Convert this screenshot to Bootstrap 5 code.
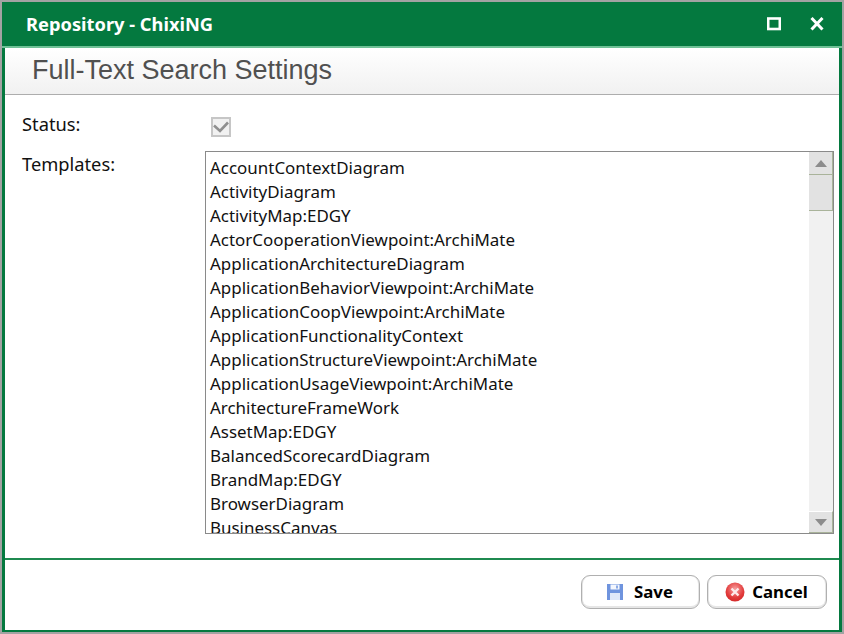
<!DOCTYPE html>
<html lang="en">
<head>
<meta charset="utf-8">
<title>Repository - ChixiNG</title>
<link rel="stylesheet" href="https://cdn.jsdelivr.net/npm/bootstrap@5.3.0/dist/css/bootstrap.min.css">
<style>
html,body{height:100%;margin:0;background:#fff;overflow:hidden}
body{font-family:"Noto Sans","Open Sans",sans-serif;color:#111}
.dlg-shell{width:844px;height:634px;border:2px solid #a3a3a3;background:#04793f}
.dlg-head{height:46px;padding:0 18px 0 24px;color:#fff;background:#04793f;border-bottom:2px solid #6fc196}
.dlg-name{font-size:18.3px;font-weight:700}
.win-icons{gap:29px}
.dlg-body{margin:0 3px 2px 3px;height:582px;background:#fff}
.title-bar{height:47px;padding:0 0 2px 27px;background:linear-gradient(#fff,#f1f1f1);border-bottom:1px solid #adadad;font-family:"Liberation Sans",sans-serif;font-size:27px;color:#505050}
.form-zone{padding:0 5px 0 17px;height:463px}
.lbl-col{width:183px;font-size:18.3px;line-height:24px}
.status-line{height:56px}
.status-lbl{padding-top:17px}
.tick-box{width:20px;height:20px;margin-top:22px;margin-left:6px;border:2px solid #c6c6c6;background:#f1f1f1}
.tmpl-lbl{padding-top:1px}
.tmpl-box{width:629px;height:383px;border:1px solid #8a8a8a;background:#fff;overflow:hidden}
.tmpl-list{padding:4px 0 0 4px;font-size:16.95px;line-height:24px;white-space:nowrap;height:381px;overflow:hidden}
.scroll-rail{width:24px;background:#f1f1f1}
.scroll-btn{height:22px;background:#e2e2e2;border-right:1px solid #a9b39a}
.scroll-btn.up-btn{height:23px;border-bottom:1px solid #a9b39a}
.scroll-btn.dn-btn{border-bottom:1px solid #a9b39a;border-top:1px solid #fff}
.scroll-thumb{height:36px;background:#e2e2e2;border-right:1px solid #a9b39a;border-bottom:1px solid #a9b39a}
.foot-zone{border-top:2px solid #1f8a50;height:72px;padding:15px 12px 0 0;gap:7px}
.act-btn{height:34px;border:1px solid #b0b0b0;border-radius:9px;background:#fff;font-size:16.8px;font-weight:700;color:#000;padding:0;box-shadow:inset 0 -2px 0 #e6e6e6,inset -1px 0 0 #e6e6e6,inset 1px 0 0 #e6e6e6}
.save-btn{width:119px;gap:10px;padding-right:2px}
.cancel-btn{width:120px;gap:7px;padding-right:1px}
</style>
</head>
<body>
<div class="dlg-shell d-flex flex-column">
  <div class="dlg-head d-flex align-items-center justify-content-between">
    <span class="dlg-name">Repository - ChixiNG</span>
    <span class="win-icons d-flex align-items-center">
      <svg width="14" height="14" viewBox="0 0 14 14"><rect x="1.200" y="1.500" width="11.600" height="10.500" fill="none" stroke="#fff" stroke-width="2.600"/></svg>
      <svg width="14" height="14" viewBox="0 0 14 14"><path d="M1.500 1 12.500 12.500M12.500 1 1.500 12.500" stroke="#fff" stroke-width="3"/></svg>
    </span>
  </div>
  <div class="dlg-body d-flex flex-column">
    <div class="title-bar d-flex align-items-center">Full-Text Search Settings</div>
    <div class="form-zone">
      <div class="status-line d-flex">
        <div class="lbl-col status-lbl">Status:</div>
        <div class="tick-box d-flex align-items-center justify-content-center">
          <svg width="16" height="14" viewBox="0 0 16 14"><path d="M1 5.500 7 11 15 2.500" fill="none" stroke="#8f8f8f" stroke-width="2.600"/></svg>
        </div>
      </div>
      <div class="d-flex">
        <div class="lbl-col tmpl-lbl">Templates:</div>
        <div class="tmpl-box d-flex">
          <div class="tmpl-list flex-grow-1">
            <div>AccountContextDiagram</div>
            <div>ActivityDiagram</div>
            <div>ActivityMap:EDGY</div>
            <div>ActorCooperationViewpoint:ArchiMate</div>
            <div>ApplicationArchitectureDiagram</div>
            <div>ApplicationBehaviorViewpoint:ArchiMate</div>
            <div>ApplicationCoopViewpoint:ArchiMate</div>
            <div>ApplicationFunctionalityContext</div>
            <div>ApplicationStructureViewpoint:ArchiMate</div>
            <div>ApplicationUsageViewpoint:ArchiMate</div>
            <div>ArchitectureFrameWork</div>
            <div>AssetMap:EDGY</div>
            <div>BalancedScorecardDiagram</div>
            <div>BrandMap:EDGY</div>
            <div>BrowserDiagram</div>
            <div>BusinessCanvas</div>
          </div>
          <div class="scroll-rail d-flex flex-column">
            <div class="scroll-btn up-btn d-flex align-items-center justify-content-center"><svg width="12" height="7" viewBox="0 0 12 7"><path d="M6 0 12 7H0Z" fill="#8c8c8c"/></svg></div>
            <div class="scroll-thumb"></div>
            <div class="flex-grow-1"></div>
            <div class="scroll-btn dn-btn d-flex align-items-center justify-content-center"><svg width="12" height="7" viewBox="0 0 12 7"><path d="M0 0H12L6 7Z" fill="#8c8c8c"/></svg></div>
          </div>
        </div>
      </div>
    </div>
    <div class="foot-zone d-flex justify-content-end">
      <button type="button" class="btn act-btn save-btn d-flex align-items-center justify-content-center">
        <svg width="18" height="18" viewBox="0 0 18 18"><path d="M1 1H17V17H1Z" fill="#6f94de"/><rect x="4.500" y="1.500" width="9" height="5" fill="#f4f7fd"/><rect x="10" y="2.500" width="2" height="3" fill="#8cabe6"/><rect x="4" y="10" width="10" height="7" fill="#dfe8f9"/></svg>
        <span>Save</span>
      </button>
      <button type="button" class="btn act-btn cancel-btn d-flex align-items-center justify-content-center">
        <svg width="20" height="20" viewBox="0 0 20 20"><defs><radialGradient id="rg" cx=".5" cy=".35" r=".65"><stop offset="0" stop-color="#f7a0a0"/><stop offset=".7" stop-color="#e23b3b"/><stop offset="1" stop-color="#d42a2a"/></radialGradient></defs><circle cx="10" cy="10" r="9.500" fill="url(#rg)"/><path d="M6.500 6.500 13.500 13.500M13.500 6.500 6.500 13.500" stroke="#fdeaea" stroke-width="2.400"/></svg>
        <span>Cancel</span>
      </button>
    </div>
  </div>
</div>
</body>
</html>
